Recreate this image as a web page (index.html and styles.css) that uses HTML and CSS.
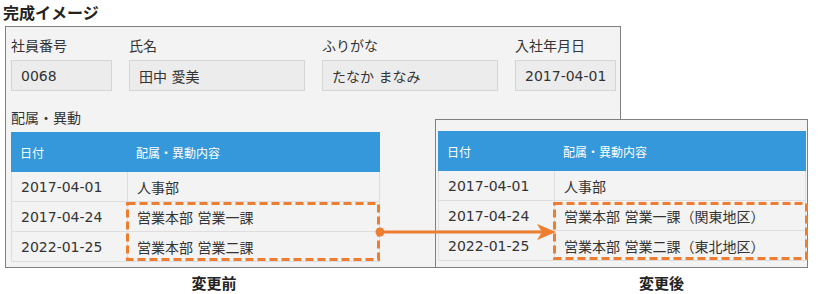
FILE: index.html
```html
<!DOCTYPE html>
<html lang="ja">
<head>
<meta charset="utf-8">
<title>完成イメージ</title>
<link rel="stylesheet" href="styles.css">
</head>
<body>
<div class="page">
  <h1 class="title">完成イメージ</h1>

  <section class="panel before">
    <div class="fields">
      <div class="field narrow">
        <div class="label">社員番号</div>
        <div class="input">0068</div>
      </div>
      <div class="field wide">
        <div class="label">氏名</div>
        <div class="input">田中 愛美</div>
      </div>
      <div class="field wide">
        <div class="label">ふりがな</div>
        <div class="input">たなか まなみ</div>
      </div>
      <div class="field narrow">
        <div class="label">入社年月日</div>
        <div class="input">2017-04-01</div>
      </div>
    </div>
    <div class="section-label">配属・異動</div>
    <div class="tablewrap">
      <table class="history">
        <thead>
          <tr><th class="col-date">日付</th><th>配属・異動内容</th></tr>
        </thead>
        <tbody>
          <tr><td class="col-date">2017-04-01</td><td>人事部</td></tr>
          <tr><td class="col-date">2017-04-24</td><td>営業本部 営業一課</td></tr>
          <tr><td class="col-date">2022-01-25</td><td>営業本部 営業二課</td></tr>
        </tbody>
      </table>
      <svg class="dash dash-before" width="254" height="59" viewBox="0 0 254 59">
        <rect x="1.5" y="1.5" width="251" height="56" fill="none" stroke="#ed7d31" stroke-width="3" stroke-dasharray="8 4"/>
      </svg>
    </div>
  </section>
  <div class="caption caption-before">変更前</div>

  <div class="after">
    <section class="panel after-panel">
      <div class="tablewrap">
        <table class="history">
          <thead>
            <tr><th class="col-date">日付</th><th>配属・異動内容</th></tr>
          </thead>
          <tbody>
            <tr><td class="col-date">2017-04-01</td><td>人事部</td></tr>
            <tr><td class="col-date">2017-04-24</td><td>営業本部 営業一課（関東地区）</td></tr>
            <tr><td class="col-date">2022-01-25</td><td>営業本部 営業二課（東北地区）</td></tr>
          </tbody>
        </table>
        <svg class="dash dash-after" width="255" height="58" viewBox="0 0 255 58">
          <rect x="1.5" y="1.5" width="252" height="55" fill="none" stroke="#ed7d31" stroke-width="3" stroke-dasharray="8 4"/>
        </svg>
      </div>
    </section>
    <div class="caption caption-after">変更後</div>
  </div>

  <svg class="arrow" width="821" height="294" viewBox="0 0 821 294">
    <line x1="380" y1="232" x2="546" y2="232" stroke="#ed7d31" stroke-width="3"/>
    <circle cx="380" cy="232" r="4.5" fill="#ed7d31"/>
    <polygon points="556,232 537,224 542,232 537,240" fill="#ed7d31"/>
  </svg>
</div>
</body>
</html>
```
FILE: styles.css
```css
* {
  box-sizing: border-box;
}

body {
  margin: 0;
  font-family: "DejaVu Sans", "Noto Sans CJK JP", sans-serif;
  color: #333;
  background: #fff;
}

.page {
  position: relative;
  width: 821px;
  height: 294px;
}

.title {
  margin: 0 0 4px;
  padding: 2px 0 0 3px;
  font-family: "Noto Sans CJK JP", sans-serif;
  font-size: 16px;
  font-weight: bold;
  line-height: 20px;
  color: #222;
}

.panel {
  background: #f3f3f3;
  border: 1px solid #808080;
}

.before {
  margin-left: 5px;
  width: 616px;
  height: 242px;
  padding: 10px 0 0 5px;
}

.fields {
  display: flex;
  gap: 17px;
}

.field.narrow {
  width: 101px;
}

.field.wide {
  width: 176px;
}

.label,
.section-label {
  font-size: 14px;
  line-height: 16px;
  font-family: "Noto Sans CJK JP", sans-serif;
}

.input {
  margin-top: 7px;
  height: 31px;
  padding: 0 9px;
  display: flex;
  align-items: center;
  background: #ececec;
  border: 1px solid #d6d6d6;
  font-size: 14px;
  white-space: nowrap;
  overflow: hidden;
}

.section-label {
  margin-top: 18px;
}

.tablewrap {
  position: relative;
  margin-top: 7px;
  width: 369px;
}

.history {
  width: 100%;
  border-collapse: separate;
  border-spacing: 0;
  table-layout: fixed;
  font-size: 14px;
}

.history .col-date {
  width: 116px;
}

.history th {
  height: 40px;
  padding: 0 9px;
  background: #3498db;
  color: #fff;
  font-family: "Noto Sans CJK JP", sans-serif;
  font-size: 12px;
  font-weight: normal;
  text-align: left;
}

.history td {
  height: 30px;
  padding: 0 9px;
  border-bottom: 1px solid #dedede;
  white-space: nowrap;
}

.history td:first-child {
  border-left: 1px solid #dedede;
}

.history td:last-child {
  border-right: 1px solid #dedede;
}

.history td + td {
  border-left: 1px solid #dedede;
}

.dash {
  position: absolute;
  display: block;
}

.dash-before {
  left: 115px;
  top: 70px;
}

.caption {
  font-family: "Noto Sans CJK JP", sans-serif;
  font-size: 15px;
  font-weight: bold;
  line-height: 20px;
  text-align: center;
  color: #222;
}

.caption-before {
  margin: 5px 0 0 11px;
  width: 406px;
}

.after {
  position: absolute;
  left: 435px;
  top: 119px;
  width: 413px;
}

.after-panel {
  width: 373px;
  height: 149px;
  padding: 11px 0 0 2px;
}

.after-panel .tablewrap {
  margin-top: 0;
  width: 368px;
}

.dash-after {
  left: 115px;
  top: 71px;
}

.caption-after {
  margin-top: 5px;
  padding-left: 40px;
}

.arrow {
  position: absolute;
  left: 0;
  top: 0;
  pointer-events: none;
}
```
